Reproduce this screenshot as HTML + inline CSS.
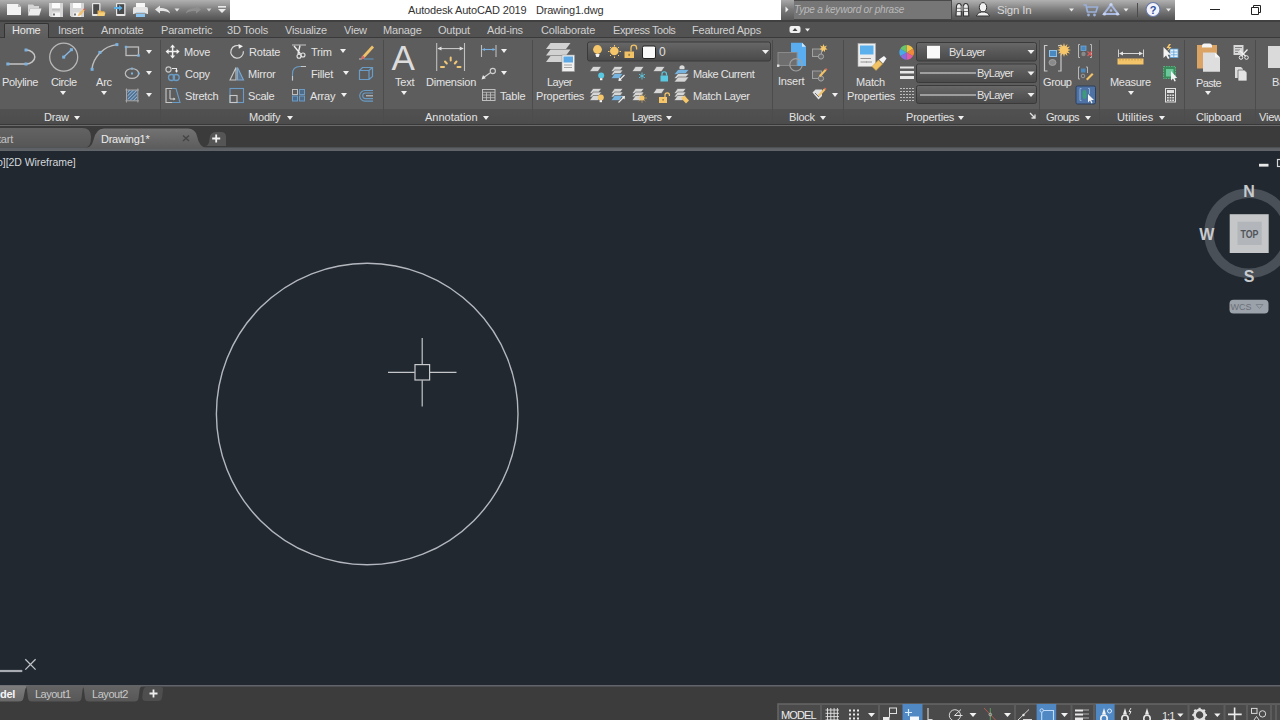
<!DOCTYPE html>
<html><head><meta charset="utf-8">
<style>
*{margin:0;padding:0;box-sizing:border-box}
html,body{width:1280px;height:720px;overflow:hidden;background:#212830;font-family:"Liberation Sans",sans-serif;position:relative}
.a{position:absolute}
.t{position:absolute;white-space:nowrap;color:#e4e4e4;font-size:11px;line-height:11px;letter-spacing:-0.2px}
.sv{position:absolute;overflow:visible}
.dd{position:absolute;width:0;height:0;border-left:3.5px solid transparent;border-right:3.5px solid transparent;border-top:4px solid #f0f0f0}
.vsep{position:absolute;width:1px;background:#4a4a4a;border-right:1px solid #606060}
#tbback{left:0;top:0;width:1280px;height:21px;background:#474747}
#qat{left:0;top:0;width:230px;height:20px;background:linear-gradient(#b0b0b0 0,#9a9a9a 22%,#808080 45%,#6a6a6a 70%,#5a5a5a 90%,#545454 100%)}
#title{left:230px;top:0;width:551px;height:21px;background:#fff}
#srchL{left:781px;top:0;width:13px;height:20px;background:linear-gradient(#a8a8a8,#7a7a7a 45%,#5a5a5a)}
#srch{left:794px;top:0;width:157px;height:19px;background:#767676;border-top:1px solid #4a4a4a}
#srchR{left:951px;top:0;width:224px;height:20px;background:linear-gradient(#b0b0b0 0,#9a9a9a 22%,#808080 45%,#6a6a6a 70%,#5a5a5a 90%,#545454 100%);border-left:1px solid #4a4a4a}
#winbtn{left:1175px;top:0;width:105px;height:21px;background:#fff}
#tabs{left:0;top:19.5px;width:1280px;height:18.5px;background:#525252;border-top:2px solid #404040;border-bottom:1px solid #3a3a3a}
#ribbon{left:0;top:38px;width:1280px;height:71px;background:#5d5d5d}
#ptitles{left:0;top:108.5px;width:1280px;height:16.5px;background:linear-gradient(#515151,#4c4c4c)}
#ftabs{left:0;top:125px;width:1280px;height:24px;background:#3b3b3b;border-top:1px solid #6a6a6a}
#fsep{left:0;top:147px;width:1280px;height:4px;background:linear-gradient(#46484a,#5c5f63 35%,#62666a)}
#canvas{left:0;top:151px;width:1280px;height:534px;background:#212830}
#ltabs{left:0;top:685px;width:1280px;height:35px;background:#3c3c3c}
</style></head><body>
<!-- ========== TITLE BAR ========== -->
<div id="tbback" class="a"></div>
<div id="qat" class="a"></div>
<div id="title" class="a"></div>
<div class="t" style="left:408px;top:4px;font-size:11px;line-height:13px;color:#333;letter-spacing:-0.15px">Autodesk AutoCAD 2019</div>
<div class="t" style="left:536px;top:4px;font-size:11px;line-height:13px;color:#333;letter-spacing:-0.2px">Drawing1.dwg</div>
<div id="srchL" class="a"></div>
<div id="srch" class="a"></div>
<div class="t" style="left:796px;top:4px;font-size:10px;line-height:12px;color:#bababa;font-style:italic;letter-spacing:-0.2px;margin-left:-2px">Type a keyword or phrase</div>
<div id="srchR" class="a"></div>
<div class="t" style="left:997px;top:4px;font-size:11.5px;line-height:13px;color:#d8d8d8">Sign In</div>
<div id="winbtn" class="a"></div>
<svg class="sv" style="left:0;top:0" width="1280" height="22" viewBox="0 0 1280 22">
 <!-- new -->
 <path d="M7 4H18L21 7V15H7Z" fill="#f2f2f2"/><path d="M18 4V7H21Z" fill="#b8b8b8"/>
 <!-- open -->
 <path d="M28 4.5H33L34.5 6H39V8.5H30L28 15.5Z" fill="#d4d4d4"/><path d="M28 15.5L30.2 8.5H41.5L39.3 15.5Z" fill="#ececec"/>
 <!-- save -->
 <path d="M49 3H63V17H50.5L49 15.5Z" fill="#d6d6d6"/><rect x="52" y="3" width="8" height="5" fill="#fbfbfb"/><rect x="52" y="9" width="8" height="1.5" fill="#bcbcbc"/><rect x="52.5" y="12.5" width="7.5" height="4.5" fill="#f4f4f4"/><rect x="53" y="13.5" width="2" height="2" fill="#777"/>
 <!-- save as -->
 <path d="M70 3H84V17H71.5L70 15.5Z" fill="#d6d6d6"/><rect x="73" y="3" width="8" height="5" fill="#fbfbfb"/><rect x="73.5" y="12.5" width="7.5" height="4.5" fill="#f4f4f4"/><rect x="74" y="13.5" width="2" height="2" fill="#777"/>
 <path d="M77.5 16.5L79 13L84 8.5L85 10L81 15Z" fill="#f0c070"/><path d="M83 9.2L84.2 8.2L85.4 9.6L84.4 10.6Z" fill="#e05a50"/>
 <!-- phone open -->
 <rect x="92" y="3" width="8.5" height="13" rx="1" fill="#e6e6e6"/><rect x="93.2" y="4.2" width="6" height="9.8" fill="#4a4a4a"/>
 <path d="M97.5 10.5H100.5L101.3 11.3H104.5V16H97.5Z" fill="#e8b050"/><path d="M97.5 16L98.8 12.5H105.5L104.3 16Z" fill="#f6cf78"/>
 <!-- phone share -->
 <rect x="116" y="3" width="9.5" height="13" rx="1" fill="#e6e6e6"/><rect x="117.2" y="4.2" width="7" height="9.8" fill="#4a4a4a"/>
 <path d="M114 7H119V5L122.5 8L119 11V9H114Z" fill="#5ab0e8"/>
 <!-- plot -->
 <rect x="136" y="3" width="9" height="4.5" fill="#f6f6f6"/><path d="M133 8.5Q133 7 134.5 7H146.5Q148 7 148 8.5V14H133Z" fill="#e4e4e4"/><rect x="136" y="12.5" width="9" height="4.5" fill="#8cc4ee"/><rect x="134.5" y="13" width="12" height="1" fill="#9a9a9a"/>
 <!-- undo -->
 <path d="M155 9.5L160 5.5V8C165 8 169.5 9.5 170 13.5C168 11.5 165 11 160 11V13.5Z" fill="#e6e6e6"/>
 <path d="M174.5 8.5H179.5L177 11.5Z" fill="#e6e6e6"/>
 <!-- redo -->
 <path d="M201 9.5L196 5.5V8C191 8 186.5 9.5 186 13.5C188 11.5 191 11 196 11V13.5Z" fill="#8e8e8e"/>
 <path d="M206.5 8.5H211.5L209 11.5Z" fill="#c8c8c8"/>
 <!-- customize -->
 <rect x="218" y="6" width="8" height="1.6" fill="#eaeaea"/><path d="M218 9H226L222 13Z" fill="#eaeaea"/>
 <!-- small arrow before search -->
 <path d="M785.5 6.5L788.5 9.5L785.5 12.5Z" fill="#f0f0f0"/>
 <!-- binoculars -->
 <g stroke="#333" stroke-width="1.1"><path d="M956.5 6Q957 3.5 959 3.5Q961 3.5 961.3 6V16H956Z" fill="#f0f0f0"/><path d="M963.5 6Q963.8 3.5 965.8 3.5Q967.8 3.5 968.3 6L968.8 16H963.5Z" fill="#f0f0f0"/></g>
 <rect x="961" y="6" width="2.7" height="5" fill="#888"/><path d="M956.3 11.5H961M963.7 11.5H968.5M957 8.3H961M963.7 8.3H968" stroke="#555" stroke-width="0.8"/>
 <!-- user -->
 <ellipse cx="983" cy="7.3" rx="3.7" ry="4.7" fill="#f2f2f2" stroke="#333" stroke-width="1"/><path d="M976.3 16Q977.5 12.3 981.5 12H984.5Q988.5 12.3 989.7 16Z" fill="#f2f2f2" stroke="#333" stroke-width="1"/>
 <path d="M1069 8.5H1074L1071.5 11.5Z" fill="#eaeaea"/>
 <!-- cart -->
 <path d="M1083.5 5H1086L1087.5 12H1096L1097.5 7H1087" fill="none" stroke="#9ab0d8" stroke-width="1.7"/><circle cx="1088.5" cy="15" r="1.4" fill="#9ab0d8"/><circle cx="1094.5" cy="15" r="1.4" fill="#9ab0d8"/>
 <!-- a360 -->
 <path d="M1111 4.5L1118 14H1104Z" fill="none" stroke="#a8b8e0" stroke-width="2"/><circle cx="1111" cy="4.5" r="1.6" fill="#c8d4f0"/><circle cx="1104.5" cy="14" r="1.6" fill="#c8d4f0"/><circle cx="1117.5" cy="14" r="1.6" fill="#c8d4f0"/><circle cx="1111" cy="10.5" r="1.3" fill="#a8b8e0"/>
 <path d="M1123.5 8.5H1128.5L1126 11.5Z" fill="#eaeaea"/>
 <rect x="1137" y="3" width="1" height="14" fill="#4c4c4c"/>
 <!-- help -->
 <circle cx="1153" cy="9.5" r="7" fill="#f2f4fa" stroke="#6878a8" stroke-width="1.2"/>
 <text x="1153" y="14" font-family="Liberation Sans" font-weight="bold" font-size="11" fill="#3050a0" text-anchor="middle">?</text>
 <path d="M1166 8.5H1171L1168.5 11.5Z" fill="#eaeaea"/>
 <!-- window buttons -->
 <rect x="1210" y="9" width="10" height="1" fill="#222"/>
 <path d="M1251.5 7.5H1258.5V14.5H1251.5Z M1253.5 7.5V5.5H1260.5V12.5H1258.5" fill="none" stroke="#222" stroke-width="1"/>
</svg>

<!-- ========== RIBBON TABS ========== -->
<div id="tabs" class="a"></div>
<div class="a" style="left:4px;top:22.5px;width:45px;height:16px;background:linear-gradient(#686868,#5c5c5c);border:1px solid #333;border-bottom:none;border-radius:2px 2px 0 0"></div>
<div class="t" style="left:12px;top:25px;color:#e8e8e8">Home</div>
<div class="t" style="left:58px;top:25px;color:#d0d0d0;letter-spacing:-0.4px">Insert</div>
<div class="t" style="left:101px;top:25px;color:#d0d0d0">Annotate</div>
<div class="t" style="left:161px;top:25px;color:#d0d0d0">Parametric</div>
<div class="t" style="left:227px;top:25px;color:#d0d0d0">3D Tools</div>
<div class="t" style="left:285px;top:25px;color:#d0d0d0">Visualize</div>
<div class="t" style="left:344px;top:25px;color:#d0d0d0">View</div>
<div class="t" style="left:383px;top:25px;color:#d0d0d0">Manage</div>
<div class="t" style="left:438px;top:25px;color:#d0d0d0">Output</div>
<div class="t" style="left:487px;top:25px;color:#d0d0d0">Add-ins</div>
<div class="t" style="left:541px;top:25px;color:#d0d0d0">Collaborate</div>
<div class="t" style="left:613px;top:25px;color:#d0d0d0;letter-spacing:-0.45px">Express Tools</div>
<div class="t" style="left:692px;top:25px;color:#d0d0d0">Featured Apps</div>

<!-- ========== RIBBON PANELS ========== -->
<div id="ribbon" class="a"></div>
<div id="ptitles" class="a"></div>
<div class="a" style="left:0;top:124px;width:1280px;height:1px;background:#383838"></div>
<!-- panel separators -->
<div class="a" style="left:160px;top:40px;width:1px;height:84px;background:#4c4c4c"></div>
<div class="a" style="left:383px;top:40px;width:1px;height:84px;background:#4c4c4c"></div>
<div class="a" style="left:532px;top:40px;width:1px;height:84px;background:#4c4c4c"></div>
<div class="a" style="left:772px;top:40px;width:1px;height:84px;background:#4c4c4c"></div>
<div class="a" style="left:843px;top:40px;width:1px;height:84px;background:#4c4c4c"></div>
<div class="a" style="left:1039px;top:40px;width:1px;height:84px;background:#4c4c4c"></div>
<div class="a" style="left:1099px;top:40px;width:1px;height:84px;background:#4c4c4c"></div>
<div class="a" style="left:1184px;top:40px;width:1px;height:84px;background:#4c4c4c"></div>
<div class="a" style="left:1255px;top:40px;width:1px;height:84px;background:#4c4c4c"></div>
<!-- panel titles -->
<div class="t" style="left:44px;top:112px;color:#e2e2e2">Draw</div><div class="dd" style="left:74px;top:116px"></div>
<div class="t" style="left:249px;top:112px;color:#e2e2e2">Modify</div><div class="dd" style="left:287px;top:116px"></div>
<div class="t" style="left:425px;top:112px;color:#e2e2e2;letter-spacing:0px">Annotation</div><div class="dd" style="left:483px;top:116px"></div>
<div class="t" style="left:632px;top:112px;color:#e2e2e2;letter-spacing:-0.6px">Layers</div><div class="dd" style="left:666px;top:116px"></div>
<div class="t" style="left:789px;top:112px;color:#e2e2e2">Block</div><div class="dd" style="left:820px;top:116px"></div>
<div class="t" style="left:906px;top:112px;color:#e2e2e2">Properties</div><div class="dd" style="left:958px;top:116px"></div>
<div class="t" style="left:1046px;top:112px;color:#e2e2e2;letter-spacing:-0.5px">Groups</div><div class="dd" style="left:1085px;top:116px"></div>
<div class="t" style="left:1117px;top:112px;color:#e2e2e2;letter-spacing:0.1px">Utilities</div><div class="dd" style="left:1159px;top:116px"></div>
<div class="t" style="left:1196px;top:112px;color:#e2e2e2">Clipboard</div>
<div class="t" style="left:1259px;top:112px;color:#e2e2e2">View</div>
<svg class="sv" style="left:1029px;top:112px" width="8" height="8" viewBox="0 0 8 8"><path d="M1 1L6 6M6 2.5V6H2.5" fill="none" stroke="#e0e0e0" stroke-width="1.3"/></svg>

<!-- ribbon icons -->
<svg class="sv" style="left:0;top:0" width="1280" height="125" viewBox="0 0 1280 125">
 <defs>
  <linearGradient id="ddg" x1="0" y1="0" x2="0" y2="1"><stop offset="0" stop-color="#686868"/><stop offset="0.5" stop-color="#585858"/><stop offset="1" stop-color="#4a4a4a"/></linearGradient>
  <pattern id="hatch" width="2.5" height="2.5" patternUnits="userSpaceOnUse" patternTransform="rotate(45)"><rect width="2.5" height="2.5" fill="#4c6a88"/><rect width="1" height="2.5" fill="#8fb4d8"/></pattern>
 </defs>
 <g fill="#80b6e4">
 </g>
 <!-- Polyline -->
 <path d="M8 64H26M26 50A8.8 7 0 0 1 26 64" fill="none" stroke="#c4c4c4" stroke-width="1.5"/>
 <rect x="6.3" y="62.5" width="3" height="3" fill="#7cb2e0"/><rect x="24.5" y="62.5" width="3" height="3" fill="#7cb2e0"/><rect x="24.5" y="48.5" width="3" height="3" fill="#7cb2e0"/>
 <!-- Circle -->
 <circle cx="63.7" cy="57.1" r="14" fill="none" stroke="#b8b8b8" stroke-width="1.3"/>
 <path d="M63.7 57L71.4 49.7" stroke="#8cbce8" stroke-width="1.2"/>
 <rect x="62.2" y="55.6" width="3" height="3" fill="#7cb2e0"/><rect x="69.9" y="48.2" width="3" height="3" fill="#7cb2e0"/>
 <!-- Arc -->
 <path d="M92 69C93 58 103 46 117 44.6" fill="none" stroke="#bdbdbd" stroke-width="1.4"/>
 <rect x="90.6" y="67.8" width="3" height="3" fill="#7cb2e0"/><rect x="98.4" y="50.9" width="3" height="3" fill="#7cb2e0"/><rect x="115.4" y="43.1" width="3" height="3" fill="#7cb2e0"/>
 <!-- Rectangle -->
 <rect x="126" y="47" width="12.5" height="8.5" fill="none" stroke="#bdbdbd" stroke-width="1.3"/>
 <rect x="124.8" y="45.8" width="2.4" height="2.4" fill="#7cb2e0"/><rect x="137.3" y="54.3" width="2.4" height="2.4" fill="#7cb2e0"/>
 <!-- Ellipse -->
 <ellipse cx="132" cy="73.5" rx="6.7" ry="4.9" fill="none" stroke="#bdbdbd" stroke-width="1.2"/>
 <rect x="131" y="72.5" width="2" height="2" fill="#7cb2e0"/><rect x="131" y="67.6" width="2" height="2" fill="#7cb2e0"/><rect x="137.8" y="72.5" width="2" height="2" fill="#7cb2e0"/>
 <!-- Hatch -->
 <rect x="127.5" y="90" width="9.5" height="10.5" fill="url(#hatch)"/>
 <path d="M126.5 88.5V102.5M137.8 88.5V102.5M125.5 90H139M125.5 100.8H139" stroke="#a8a8a8" stroke-width="1"/>
 <!-- Move -->
 <g stroke="#f2f2f2" stroke-width="1.5" fill="none"><path d="M172.6 46V57.2M167 51.6H178.2"/></g>
 <g fill="#f2f2f2"><path d="M172.6 44.6L170 47.6H175.2Z"/><path d="M172.6 58.6L170 55.6H175.2Z"/><path d="M165.6 51.6L168.6 49V54.2Z"/><path d="M179.6 51.6L176.6 49V54.2Z"/></g>
 <!-- Rotate -->
 <path d="M240.5 46.5A6.3 6.3 0 1 0 243.4 51.2" fill="none" stroke="#d8d8d8" stroke-width="1.2"/>
 <path d="M238.5 44L243 46.3L238.8 48.8Z" fill="#f2f2f2"/>
 <!-- Copy -->
 <circle cx="168.5" cy="69.5" r="2.6" fill="none" stroke="#c8c8c8" stroke-width="1.1"/>
 <path d="M172 68.5H176.5V71" fill="none" stroke="#e8e8e8" stroke-width="1.1"/><path d="M174.8 70.5H178.2L176.5 72.8Z" fill="#f0f0f0"/>
 <circle cx="171.5" cy="77.5" r="3" fill="none" stroke="#6a9cc6" stroke-width="1.3"/><circle cx="176.2" cy="77.5" r="3" fill="none" stroke="#6a9cc6" stroke-width="1.3"/>
 <!-- Mirror -->
 <path d="M230 80L236 67.5V80Z" fill="none" stroke="#c8c8c8" stroke-width="1.1"/>
 <path d="M237.5 67.5L243.5 80H237.5Z" fill="#5e7690" stroke="#7aa8d0" stroke-width="1.1"/>
 <!-- Stretch -->
 <path d="M172 88.5H166V102.5H172" fill="none" stroke="#c8c8c8" stroke-width="1.1"/>
 <path d="M172 88.5H176L180 102.5H172" fill="none" stroke="#6a9cc6" stroke-width="1.1"/>
 <path d="M170 90V99H174" fill="none" stroke="#d0d0d0" stroke-width="1"/><path d="M173.5 97.5L175.5 99L173.5 100.5Z" fill="#e0e0e0"/>
 <!-- Scale -->
 <rect x="230" y="88.5" width="13.5" height="14" fill="none" stroke="#6a9cc6" stroke-width="1.1"/>
 <rect x="230" y="95.5" width="7" height="7" fill="none" stroke="#c8c8c8" stroke-width="1.1"/>
 <!-- Trim -->
 <path d="M292 45H306" stroke="#c8c8c8" stroke-width="1"/>
 <path d="M294 46L300.5 54M300 45.5L298 54" stroke="#eaeaea" stroke-width="1.4"/>
 <circle cx="299" cy="56.3" r="2" fill="none" stroke="#e6e6e6" stroke-width="1.1"/><circle cx="303" cy="55" r="2" fill="none" stroke="#e6e6e6" stroke-width="1.1"/>
 <!-- Erase -->
 <path d="M361.5 57L372 45.5L374 47.5L363.5 59Z" fill="#f0c26a"/>
 <path d="M361.5 57L363.5 59L361 59.5Z M361.5 57L363 55.5L365 57.5L363.5 59Z" fill="#d86a6a"/>
 <rect x="359" y="58.5" width="2.5" height="1" fill="#c8c8c8"/><rect x="364" y="58.5" width="9.5" height="1" fill="#5e9ccc"/>
 <!-- Fillet -->
 <path d="M292.5 80.5V74Q292.5 66.5 300 66.5H306" fill="none" stroke="#6a9cc6" stroke-width="1.1"/>
 <path d="M292.5 80.5V76M301 66.5H306" fill="none" stroke="#c8c8c8" stroke-width="1.1"/>
 <!-- Explode (box) -->
 <path d="M359.5 70.5H369V79.5H359.5Z M359.5 70.5L362.5 67.5H372.5V76.5L369 79.5 M369 70.5L372.5 67.5" fill="none" stroke="#6a9cc6" stroke-width="1.2"/>
 <!-- Array -->
 <rect x="292.5" y="89.5" width="5" height="5" fill="none" stroke="#bdbdbd" stroke-width="1"/>
 <rect x="299.5" y="89.5" width="5" height="5" fill="#4e6c8a" stroke="#6a9cc6" stroke-width="1"/>
 <rect x="292.5" y="96" width="5" height="5" fill="#4e6c8a" stroke="#6a9cc6" stroke-width="1"/>
 <rect x="299.5" y="96" width="5" height="5" fill="#4e6c8a" stroke="#6a9cc6" stroke-width="1"/>
 <!-- Offset -->
 <path d="M373 90.5H365A5.3 5.3 0 0 0 365 101.1H373 M373 93H365.5A2.8 2.8 0 0 0 365.5 98.6H373" fill="none" stroke="#6a9cc6" stroke-width="1.1"/>
 <path d="M373 95.8H366" stroke="#c8c8c8" stroke-width="1.1"/>
 <!-- Text A -->
 <text x="391.5" y="70" font-family="Liberation Sans" font-size="35" fill="#dcdcdc">A</text>
 <!-- Dimension -->
 <path d="M436.7 43V71M464.5 43V71" stroke="#c0c0c0" stroke-width="1.1"/>
 <path d="M438 48.6H463" stroke="#d0d0d0" stroke-width="1"/>
 <path d="M437.5 48.6L441.5 46.6V50.6Z M463.7 48.6L459.7 46.6V50.6Z" fill="#e0e0e0"/>
 <g stroke="#f0c878" stroke-width="2" stroke-linecap="round"><path d="M441 67H444M457.5 67H460.5M445 61.5L446.8 63.5M456.5 61.5L454.8 63.5M450.7 57.5V60.5"/></g>
 <!-- linear dim -->
 <path d="M481.5 45V57M496 45V57" stroke="#bdbdbd" stroke-width="1.1"/>
 <path d="M482.5 49.5H495" stroke="#78b0e0" stroke-width="1.1"/>
 <path d="M482 49.5L485 48V51Z M495.5 49.5L492.5 48V51Z" fill="#78b0e0"/>
 <!-- leader -->
 <circle cx="492.8" cy="71" r="2.6" fill="none" stroke="#d0d0d0" stroke-width="1.1"/>
 <path d="M490.7 72.5L483 78" stroke="#d0d0d0" stroke-width="1.1"/>
 <path d="M481.5 79.5L483 75L485.8 78.2Z" fill="#e6e6e6"/>
 <!-- table -->
 <rect x="482.5" y="89.5" width="12.5" height="11" fill="none" stroke="#c0c0c0" stroke-width="1"/>
 <path d="M482.5 92.3H495M482.5 95H495M482.5 97.7H495M486.5 92.3V100.5M490.5 92.3V100.5" stroke="#c0c0c0" stroke-width="0.8"/>
 <!-- Layer properties big -->
 <g fill="#d2d2d2"><path d="M550.5 43H570.5L566 49H546Z"/><path d="M550.5 49.5H570.5L566 55.5H546Z"/><path d="M550.5 56H566L562 62H546Z"/></g>
 <rect x="562" y="55" width="12.5" height="16.5" fill="#f0f0f0" stroke="#9a9a9a" stroke-width="0.6"/>
 <rect x="563.5" y="56.5" width="9.5" height="6" fill="#5aa8e6"/>
 <path d="M564 65H572M564 67.5H572" stroke="#909090" stroke-width="0.8"/>
 <!-- layer dropdown -->
 <rect x="587.5" y="42" width="183" height="19" rx="2" fill="url(#ddg)" stroke="#3a3a3a" stroke-width="1"/>
 <path d="M762 50H769L765.5 54Z" fill="#f0f0f0"/>
 <circle cx="597.5" cy="49.5" r="4.4" fill="#f5c66a"/><path d="M595.3 54H599.7L598.7 57H596.3Z" fill="#f4f4f4"/>
 <circle cx="614.3" cy="51" r="4.3" fill="#f5c66a"/>
 <g stroke="#f5c66a" stroke-width="1"><path d="M614.5 45V46.5M614.5 56.5V58M608 51.5H609.5M619.5 51.5H621M610 47L611 48M618 55L619 56M619 47L618 48M611 55L610 56"/></g>
 <rect x="624.5" y="51.5" width="9.5" height="6.5" fill="#f2c266"/><path d="M631 51.5V48A2.8 2.8 0 0 1 636.6 48V49.5" fill="none" stroke="#f2c266" stroke-width="1.3"/><rect x="628.5" y="53.8" width="1.2" height="2" fill="#7a6030"/>
 <rect x="642.5" y="46" width="13" height="12.5" rx="1.5" fill="#fafafa" stroke="#222" stroke-width="1"/>
 <!-- row2 layer icons -->
<path d="M593.0 66.5H601.5L598.0 71.5H589.5Z" fill="#d6d6d6" stroke="#555" stroke-width="0.6"/>
<circle cx="601.2" cy="75.5" r="3" fill="#5ac8e0"/><rect x="600" y="78.2" width="2.4" height="2" fill="#f4f4f4"/>
<path d="M614.5 66.5H623L619.5 71.5H611Z" fill="#d6d6d6" stroke="#555" stroke-width="0.6"/><path d="M614.5 70.0H623L619.5 75.0H611Z" fill="#d6d6d6" stroke="#555" stroke-width="0.6"/><path d="M614.5 73.5H623L619.5 78.5H611Z" fill="#78b4e0" stroke="#555" stroke-width="0.6"/><path d="M619 80.5L624.5 75" stroke="#f0f0f0" stroke-width="1.1"/><path d="M618.5 81L619 77.5L622 80.5Z" fill="#f4f4f4"/>
<path d="M635.5 66.5H644L640.5 71.5H632Z" fill="#d6d6d6" stroke="#555" stroke-width="0.6"/>
<g stroke="#5ac8e0" stroke-width="0.9"><path d="M642 72.5V79.5M639 74.2L645 77.8M639 77.8L645 74.2"/></g>
<path d="M656.5 66.5H665L661.5 71.5H653Z" fill="#d6d6d6" stroke="#555" stroke-width="0.6"/><rect x="660.5" y="75.5" width="7.5" height="6" fill="#5ac8e0"/><path d="M662 75.5V74A2.2 2.2 0 0 1 666.5 74V75.5" fill="none" stroke="#5ac8e0" stroke-width="1.2"/>
<circle cx="682" cy="67.8" r="2.6" fill="#dadada"/><path d="M678 69.5H689L685 74.5H674Z" fill="#78b4e0" stroke="#555" stroke-width="0.6"/><path d="M678 73.5H689L685 78.5H674Z" fill="#d6d6d6" stroke="#555" stroke-width="0.6"/><path d="M678 77.0H689L685 82.0H674Z" fill="#d6d6d6" stroke="#555" stroke-width="0.6"/>
<path d="M593.0 88.5H601.5L598.0 93.5H589.5Z" fill="#d6d6d6" stroke="#555" stroke-width="0.6"/><path d="M593.0 92.0H601.5L598.0 97.0H589.5Z" fill="#d6d6d6" stroke="#555" stroke-width="0.6"/><path d="M593.0 95.5H601.5L598.0 100.5H589.5Z" fill="#d6d6d6" stroke="#555" stroke-width="0.6"/><circle cx="600.8" cy="97.5" r="3" fill="#f5c66a"/><rect x="599.6" y="100.2" width="2.4" height="2" fill="#f4f4f4"/>
<path d="M614.5 88.5H623L619.5 93.5H611Z" fill="#d6d6d6" stroke="#555" stroke-width="0.6"/><path d="M614.5 92.0H623L619.5 97.0H611Z" fill="#d6d6d6" stroke="#555" stroke-width="0.6"/><path d="M614.5 95.5H623L619.5 100.5H611Z" fill="#78b4e0" stroke="#555" stroke-width="0.6"/><path d="M618.5 102.5L624 97" stroke="#f0f0f0" stroke-width="1.1"/><path d="M625 96L624.5 99.5L621.5 96.5Z" fill="#f4f4f4"/>
<path d="M635.5 88.5H644L640.5 93.5H632Z" fill="#d6d6d6" stroke="#555" stroke-width="0.6"/><path d="M635.5 92.0H644L640.5 97.0H632Z" fill="#d6d6d6" stroke="#555" stroke-width="0.6"/><path d="M635.5 95.5H644L640.5 100.5H632Z" fill="#d6d6d6" stroke="#555" stroke-width="0.6"/><circle cx="642" cy="98" r="2.6" fill="#f5c66a"/><g stroke="#f5c66a" stroke-width="0.9"><path d="M642 93.5V94.5M642 101.5V102.5M637.5 98H638.5M645.5 98H646.5M638.8 94.8L639.5 95.5M644.5 100.5L645.2 101.2M645.2 94.8L644.5 95.5M639.5 100.5L638.8 101.2"/></g>
<path d="M656.5 88.5H665L661.5 93.5H653Z" fill="#d6d6d6" stroke="#555" stroke-width="0.6"/><rect x="659" y="97" width="8" height="6" fill="#f5c66a"/><path d="M665 97V95A2.2 2.2 0 0 1 669.4 95V96" fill="none" stroke="#f5c66a" stroke-width="1.2"/><rect x="662.5" y="99" width="1.2" height="1.6" fill="#8a6a30"/>
<path d="M677.5 88.5H686L682.5 93.5H674Z" fill="#d6d6d6" stroke="#555" stroke-width="0.6"/><path d="M677.5 92.0H686L682.5 97.0H674Z" fill="#d6d6d6" stroke="#555" stroke-width="0.6"/><path d="M677.5 95.5H686L682.5 100.5H674Z" fill="#d6d6d6" stroke="#555" stroke-width="0.6"/><path d="M681 98L684.5 95.5L689 100.5L686 103.5Z" fill="#f5c66a"/>
 <!-- Insert -->
 <path d="M791 42.7H802L806 46.7V66H791Z" fill="#5aaef0"/><path d="M802 42.7V46.7H806Z" fill="#cde6fa"/>
 <rect x="778" y="52.5" width="19" height="13" fill="#6e6e6e" stroke="#8a8a8a" stroke-width="1"/>
 <circle cx="796" cy="64.8" r="6.2" fill="none" stroke="#a0a0a0" stroke-width="1.2"/>
 <rect x="777" y="64.5" width="2.4" height="2.4" fill="#e0e0e0"/>
 <!-- block small icons -->
 <rect x="812.5" y="49" width="9" height="7.5" fill="#6a6a6a" stroke="#a0a0a0" stroke-width="1"/><circle cx="821" cy="56.5" r="2.6" fill="#6a6a6a" stroke="#a8a8a8" stroke-width="1"/>
 <path d="M823.5 44L824.5 46.5L827 45.5L825.5 47.8L827.5 49.5L825 49.7L825 52.3L823.5 50.2L822 52.3L822 49.7L819.5 49.5L821.5 47.8L820 45.5L822.5 46.5Z" fill="#f5c66a"/>
 <rect x="812.5" y="71" width="9" height="7.5" fill="#6a6a6a" stroke="#a0a0a0" stroke-width="1"/><circle cx="821" cy="78.5" r="2.6" fill="#6a6a6a" stroke="#a8a8a8" stroke-width="1"/>
 <path d="M819 75.5L825 69L826.5 70.5L820.5 77Z" fill="#f2c266"/><path d="M825 69L826 68L827.5 69.5L826.5 70.5Z" fill="#e06a5a"/>
 <path d="M812.5 92.5L815.5 89.5H822V96L818.5 99.5Z" fill="#e0e0e0"/><path d="M815 93L819 97" stroke="#777" stroke-width="1"/>
 <path d="M818 95L824 88.5L825.5 90L819.5 96.5Z" fill="#f2c266"/><path d="M824 88.5L825 87.5L826.5 89L825.5 90Z" fill="#e06a5a"/>
 <!-- Match properties -->
 <rect x="858" y="43.5" width="17.5" height="23" fill="#ececec" stroke="#b0b0b0" stroke-width="0.6"/>
 <rect x="860" y="45.5" width="13.5" height="9" fill="#5ab0ec"/>
 <path d="M860.5 58.5H871M860.5 62H867" stroke="#8a8a8a" stroke-width="0.9"/>
 <path d="M872 66.5L878.5 60L882.5 64L876 70.5Z" fill="#f2c266" stroke="#c89a40" stroke-width="0.6"/><path d="M879 59.5L884 56L886.5 58.5L883 63.5Z" fill="#f6f6f6"/><path d="M866 62H872" stroke="#8a8a8a" stroke-width="0.9"/>
 <!-- color wheel -->
 <g transform="translate(906.7 52.4)">
  <path d="M0 0L0 -7.3A7.3 7.3 0 0 1 6.32 -3.65Z" fill="#f6c244"/>
  <path d="M0 0L6.32 -3.65A7.3 7.3 0 0 1 6.32 3.65Z" fill="#f08a3a"/>
  <path d="M0 0L6.32 3.65A7.3 7.3 0 0 1 0 7.3Z" fill="#e65aa0"/>
  <path d="M0 0L0 7.3A7.3 7.3 0 0 1 -6.32 3.65Z" fill="#8a6ae0"/>
  <path d="M0 0L-6.32 3.65A7.3 7.3 0 0 1 -6.32 -3.65Z" fill="#4aa8e6"/>
  <path d="M0 0L-6.32 -3.65A7.3 7.3 0 0 1 0 -7.3Z" fill="#6ac46a"/>
 </g>
 <!-- lineweight -->
 <rect x="900" y="66.5" width="14" height="2" fill="#e6e6e6"/><rect x="900" y="71" width="14" height="2.5" fill="#e6e6e6"/><rect x="900" y="76" width="14" height="3" fill="#e6e6e6"/>
 <!-- linetype -->
 <g stroke="#bdbdbd" stroke-width="1" stroke-dasharray="2 1"><path d="M900 88.5H914M900 91.5H914M900 94.5H914M900 97.5H914M900 100.5H914"/></g>
 <!-- prop dropdowns -->
 <rect x="916.5" y="42.5" width="120" height="18.5" rx="2" fill="url(#ddg)" stroke="#3a3a3a" stroke-width="1"/>
 <rect x="916.5" y="64" width="120" height="18.5" rx="2" fill="url(#ddg)" stroke="#3a3a3a" stroke-width="1"/>
 <rect x="916.5" y="85.5" width="120" height="18" rx="2" fill="url(#ddg)" stroke="#3a3a3a" stroke-width="1"/>
 <rect x="927" y="45.8" width="13" height="12.7" fill="#fafafa"/>
 <path d="M920 73H976M920 95H976" stroke="#e4e4e4" stroke-width="1.2"/>
 <path d="M1027.5 50H1034.5L1031 54Z M1027.5 71.5H1034.5L1031 75.5Z M1027.5 93H1034.5L1031 97Z" fill="#f0f0f0"/>
 <!-- Group -->
 <path d="M1047.5 45.5H1044.5V71H1047.5M1058 45.5H1061V71H1058" fill="none" stroke="#c8c8c8" stroke-width="1.2"/>
 <rect x="1049.5" y="50.5" width="7" height="6" fill="#4a88c0" stroke="#8cc0ea" stroke-width="1"/>
 <ellipse cx="1052.5" cy="62.5" rx="3.5" ry="3" fill="#8a8a8a" stroke="#a8a8a8" stroke-width="0.8"/>
 <path d="M1064.0 43.0L1065.0 46.3L1067.5 43.9L1066.7 47.3L1070.1 46.5L1067.7 49.0L1071.0 50.0L1067.7 51.0L1070.1 53.5L1066.7 52.7L1067.5 56.1L1065.0 53.7L1064.0 57.0L1063.0 53.7L1060.5 56.1L1061.3 52.7L1057.9 53.5L1060.3 51.0L1057.0 50.0L1060.3 49.0L1057.9 46.5L1061.3 47.3L1060.5 43.9L1063.0 46.3Z" fill="#f5c66a"/>
 <path d="M1080 44.5H1078.5V57.5H1080M1090 44.5H1091.5V57.5H1090" fill="none" stroke="#b8b8b8" stroke-width="1"/>
 <rect x="1081" y="46" width="5" height="4.5" fill="#4a88c0" stroke="#78b0e0" stroke-width="0.7"/><circle cx="1083.5" cy="54" r="2.2" fill="#8a8a8a"/>
 <path d="M1087.5 51.5L1092 56M1092 51.5L1087.5 56" stroke="#e05a5a" stroke-width="1.2"/>
 <path d="M1080 67H1078.5V79H1080M1086 67H1087.5V73" fill="none" stroke="#b8b8b8" stroke-width="1"/>
 <rect x="1081" y="68.5" width="4.5" height="4" fill="#4a88c0"/><circle cx="1083" cy="76" r="1.8" fill="none" stroke="#aaa" stroke-width="0.8"/>
 <path d="M1086 79L1092 73L1093.5 74.5L1087.5 80.5Z" fill="#f2c266"/>
 <rect x="1076" y="86" width="19.5" height="18" rx="1.5" fill="#4e72a4" stroke="#2e3e58" stroke-width="1"/>
 <path d="M1081.5 88.5H1080V100.5H1081.5M1088 88.5H1089.5V94" fill="none" stroke="#8ab0d8" stroke-width="1"/>
 <rect x="1082.5" y="90" width="4" height="9" rx="2" fill="#3e9a7a"/>
 <path d="M1088 94V102.5L1090 100.5L1091.5 103.5L1092.5 103L1091.2 100H1094Z" fill="#f4f4f4"/>
 <!-- Measure -->
 <path d="M1118.5 49.5V57M1143.5 49.5V57" stroke="#d0d0d0" stroke-width="1"/>
 <path d="M1120 53.5H1142" stroke="#d8d8d8" stroke-width="1"/>
 <path d="M1119 53.5L1123 51.5V55.5Z M1143 53.5L1139 51.5V55.5Z" fill="#e8e8e8"/>
 <rect x="1117.5" y="58.5" width="26" height="6" fill="#f4c46a"/>
 <path d="M1120 58.5V60.5M1123 58.5V60.5M1126 58.5V60.5M1129 58.5V60.5M1132 58.5V60.5M1135 58.5V60.5M1138 58.5V60.5M1141 58.5V60.5" stroke="#b88c3a" stroke-width="0.7"/>
 <!-- quick select -->
 <rect x="1170" y="49" width="8" height="8.5" fill="#e8f2fa" stroke="#5aa0d8" stroke-width="0.8"/>
 <path d="M1171 52H1177.5M1171 54.8H1177.5M1173.8 49.5V57.5" stroke="#5aa0d8" stroke-width="0.8"/>
 <path d="M1163.5 47V58L1166 55.5L1168 59L1169.5 58.2L1167.6 54.8H1171Z" fill="#f4f4f4"/>
 <path d="M1169 44L1166.5 48H1169L1167 51.5L1171.5 47H1169L1171 44Z" fill="#f5c66a"/>
 <!-- select all -->
 <rect x="1163.5" y="66.5" width="12" height="12" fill="#3a8a5a" stroke="#5ac08a" stroke-width="0.8" stroke-dasharray="1.5 1"/>
 <rect x="1166" y="69" width="7.5" height="7.5" fill="#6ac89a"/>
 <path d="M1171 71V80.5L1173 78.5L1174.5 81.5L1175.8 81L1174.5 78H1177.2Z" fill="#f4f4f4"/>
 <!-- calculator -->
 <rect x="1165.5" y="88.5" width="10" height="13.5" fill="none" stroke="#e0e0e0" stroke-width="1"/>
 <rect x="1167" y="90" width="7" height="3" fill="#e0e0e0"/>
 <g fill="#e0e0e0"><rect x="1167" y="94.5" width="1.8" height="1.5"/><rect x="1169.6" y="94.5" width="1.8" height="1.5"/><rect x="1172.2" y="94.5" width="1.8" height="1.5"/><rect x="1167" y="97" width="1.8" height="1.5"/><rect x="1169.6" y="97" width="1.8" height="1.5"/><rect x="1172.2" y="97" width="1.8" height="1.5"/><rect x="1167" y="99.5" width="1.8" height="1.5"/><rect x="1169.6" y="99.5" width="1.8" height="1.5"/><rect x="1172.2" y="99.5" width="1.8" height="1.5"/></g>
 <!-- Paste -->
 <rect x="1197" y="45" width="20" height="23.5" fill="#dba464"/>
 <path d="M1202 46Q1202 43.5 1204.5 43.5H1209.5Q1212 43.5 1212 46V47.5H1202Z" fill="#f4f4f4"/>
 <path d="M1203 52.5H1215L1220 57.5V71.8H1203Z" fill="#dedede"/><path d="M1215 52.5V57.5H1220Z" fill="#f6f6f6"/>
 <!-- cut -->
 <rect x="1233.5" y="45" width="10" height="10" fill="#d8d8d8"/>
 <path d="M1235 47.5H1242M1235 50H1240M1235 52.5H1238" stroke="#777" stroke-width="0.9"/>
 <path d="M1239.5 50.5L1246.5 57M1247.5 49.5L1241 56.5" stroke="#f0f0f0" stroke-width="1.3"/>
 <circle cx="1241" cy="57.5" r="1.8" fill="#5a5a5a" stroke="#f0f0f0" stroke-width="1"/><circle cx="1246.5" cy="57.5" r="1.8" fill="#5a5a5a" stroke="#f0f0f0" stroke-width="1"/>
 <!-- copy clip -->
 <path d="M1235 67H1241L1243 69V78H1235Z" fill="#dcdcdc"/>
 <path d="M1238 70H1244.5L1247 72.5V81H1238Z" fill="#e4e4e4" stroke="#5a5a5a" stroke-width="0.7"/>
 <!-- view -->
 <rect x="1268" y="46" width="14" height="22" fill="#dadada"/>
</svg>
<!-- ribbon labels -->
<div class="t" style="left:2px;top:77px;letter-spacing:-0.3px">Polyline</div>
<div class="t" style="left:51px;top:77px;letter-spacing:-0.4px">Circle</div><div class="dd" style="left:60px;top:91px"></div>
<div class="t" style="left:96px;top:77px">Arc</div><div class="dd" style="left:101px;top:91px"></div>
<div class="dd" style="left:145.5px;top:49.5px"></div>
<div class="dd" style="left:145.5px;top:71px"></div>
<div class="dd" style="left:145.5px;top:93px"></div>
<div class="t" style="left:184px;top:47px">Move</div>
<div class="t" style="left:249px;top:47px">Rotate</div>
<div class="t" style="left:311px;top:47px">Trim</div><div class="dd" style="left:340px;top:49px"></div>
<div class="t" style="left:185px;top:69px">Copy</div>
<div class="t" style="left:248px;top:69px">Mirror</div>
<div class="t" style="left:311px;top:69px">Fillet</div><div class="dd" style="left:343px;top:71px"></div>
<div class="t" style="left:185px;top:91px">Stretch</div>
<div class="t" style="left:248px;top:91px">Scale</div>
<div class="t" style="left:310px;top:91px">Array</div><div class="dd" style="left:341px;top:93px"></div>
<div class="t" style="left:395px;top:77px">Text</div><div class="dd" style="left:401px;top:91px"></div>
<div class="t" style="left:426px;top:77px">Dimension</div>
<div class="dd" style="left:501px;top:49px"></div>
<div class="dd" style="left:501px;top:71px"></div>
<div class="t" style="left:500px;top:91px">Table</div>
<div class="t" style="left:547px;top:77px;letter-spacing:-0.5px">Layer</div>
<div class="t" style="left:536px;top:91px">Properties</div>
<div class="t" style="left:693px;top:69px;letter-spacing:-0.45px">Make Current</div>
<div class="t" style="left:693px;top:91px;letter-spacing:-0.35px">Match Layer</div>
<div class="t" style="left:778px;top:76px">Insert</div>
<div class="dd" style="left:832px;top:93px"></div>
<div class="t" style="left:856px;top:77px">Match</div>
<div class="t" style="left:847px;top:91px">Properties</div>
<div class="t" style="left:1043px;top:77px;letter-spacing:-0.4px">Group</div>
<div class="t" style="left:1110px;top:77px;letter-spacing:-0.3px">Measure</div><div class="dd" style="left:1128px;top:91px"></div>
<div class="t" style="left:1196px;top:77.5px;letter-spacing:-0.65px">Paste</div><div class="dd" style="left:1205px;top:91px"></div>
<div class="t" style="left:1272px;top:77px">Ba</div>
<div class="t" style="left:659px;top:47px;font-size:12px;color:#e0e0e0">0</div>
<div class="t" style="left:949px;top:47px;letter-spacing:-0.6px">ByLayer</div>
<div class="t" style="left:977px;top:68px;letter-spacing:-0.6px">ByLayer</div>
<div class="t" style="left:977px;top:90px;letter-spacing:-0.6px">ByLayer</div>
<svg class="sv" style="left:786.5px;top:22.7px" width="30" height="14" viewBox="0 0 30 14"><rect x="2.5" y="3" width="11" height="7" rx="2" fill="#f0f0f0"/><path d="M5.5 8L8 5L10.5 8Z" fill="#444"/><path d="M18 5.5H23L20.5 8.5Z" fill="#f0f0f0"/></svg>

<!-- ========== FILE TABS ========== -->
<div id="ftabs" class="a"></div>
<div id="fsep" class="a"></div>
<svg class="sv" style="left:0;top:120px" width="260" height="32" viewBox="0 120 260 32">
 <defs>
  <linearGradient id="tabg" x1="0" y1="0" x2="0" y2="1"><stop offset="0" stop-color="#737373"/><stop offset="1" stop-color="#5c5c5c"/></linearGradient>
  <linearGradient id="tabs2" x1="0" y1="0" x2="0" y2="1"><stop offset="0" stop-color="#636363"/><stop offset="1" stop-color="#565656"/></linearGradient>
 </defs>
 <path d="M-5 147.5V128H82Q91 128 91 137Q91 147.5 85 147.5Z" fill="url(#tabs2)"/>
 <path d="M85 148.5Q91.5 148 93.5 140Q96 128.5 104 128.5H188Q195 128.5 197 136Q199 147 207 148.5Z" fill="url(#tabg)"/>
 <path d="M206 146Q209 145 209.5 139Q210 132 216 132H221Q226 132 226 137V146Z" fill="#555"/>
 <path d="M216.2 134.5V142.5M212.2 138.5H220.2" stroke="#f0f0f0" stroke-width="1.8"/>
 <path d="M183 135.5L189 141M189 135.5L183 141" stroke="#444" stroke-width="1.3"/>
</svg>
<div class="t" style="left:-2px;top:134px;color:#c2c2c2">tart</div>
<div class="t" style="left:101px;top:134px;color:#ececec;letter-spacing:-0.25px">Drawing1*</div>

<!-- ========== CANVAS ========== -->
<div id="canvas" class="a"></div>
<div class="t" style="left:-3px;top:157px;font-size:10.5px;color:#d4d8dc;letter-spacing:-0.05px">o][2D Wireframe]</div>
<svg class="sv" style="left:0;top:151px" width="1280" height="534" viewBox="0 151 1280 534">
 <circle cx="367.2" cy="414" r="150.8" fill="none" stroke="#b4b8be" stroke-width="1.4"/>
 <path d="M422.2 338V364.5M422.2 380.2V406.5M388 372.3H414.8M429.7 372.3H456.5" stroke="#c4c6ca" stroke-width="1.2"/>
 <rect x="415" y="364.6" width="14.6" height="15.4" fill="none" stroke="#c8cacd" stroke-width="1.2"/>
 <!-- UCS -->
 <path d="M0 671H22.3" stroke="#a8acb2" stroke-width="2.2"/>
 <path d="M25.3 659.3L35.6 669.6M35.6 659.3L25.3 669.6" stroke="#c0c4c8" stroke-width="1.3"/>
 <!-- viewcube -->
 <circle cx="1249" cy="233.2" r="40" fill="none" stroke="#4a5058" stroke-width="9.5"/>
 <rect x="1229.7" y="214.2" width="39" height="38.8" fill="#c4c6c8"/>
 <rect x="1237.5" y="221.7" width="24.2" height="23.3" fill="#b2b6ba"/>
 <text x="1249.5" y="238" font-family="Liberation Sans" font-weight="bold" font-size="11" fill="#50545a" text-anchor="middle" transform="translate(1249.5 0) scale(0.8 1) translate(-1249.5 0)">TOP</text>
 <text x="1249" y="197.3" font-family="Liberation Sans" font-weight="bold" font-size="16" fill="#c8cacd" text-anchor="middle">N</text>
 <text x="1249" y="282" font-family="Liberation Sans" font-weight="bold" font-size="16" fill="#c8cacd" text-anchor="middle">S</text>
 <text x="1206.8" y="240" font-family="Liberation Sans" font-weight="bold" font-size="16" fill="#c8cacd" text-anchor="middle">W</text>
 <rect x="1229.5" y="299.8" width="39" height="13.6" rx="4" fill="#9ca2aa"/>
 <text x="1241" y="310" font-family="Liberation Sans" font-size="9" fill="#6a7078" text-anchor="middle">WCS</text>
 <path d="M1256 304.5H1263L1259.5 308.5Z" fill="none" stroke="#7a8088" stroke-width="0.9"/>
 <!-- viewport controls -->
 <rect x="1259" y="163.8" width="9.5" height="2.8" fill="#e8e8e8"/>
 <rect x="1277.5" y="159.5" width="5" height="7" fill="none" stroke="#d8d8d8" stroke-width="1.2"/>
</svg>

<!-- ========== LAYOUT TABS / STATUS ========== -->
<div id="ltabs" class="a"></div>
<svg class="sv" style="left:0;top:684px" width="1280" height="36" viewBox="0 684 1280 36">
 <defs><linearGradient id="mtab" x1="0" y1="0" x2="0" y2="1"><stop offset="0" stop-color="#7e7e7e"/><stop offset="1" stop-color="#686868"/></linearGradient><linearGradient id="ltab" x1="0" y1="0" x2="0" y2="1"><stop offset="0" stop-color="#646464"/><stop offset="1" stop-color="#575757"/></linearGradient></defs>
 <rect x="0" y="685" width="1280" height="1.5" fill="#62646a"/>
 <path d="M-5 685.5H29Q26 686 25 690L23.5 698Q22.8 701.5 19 701.5H-5Z" fill="url(#mtab)"/>
 <path d="M25 685.5H86Q83 686 82.5 690L81.5 698Q81 701.5 77.5 701.5H32Q28.5 701.5 28 698L27 690Q26.5 686 25 685.5Z" fill="url(#ltab)"/>
 <path d="M82 685.5H143Q140 686 139.5 690L138.5 698Q138 701.5 134.5 701.5H89Q85.5 701.5 85 698L84 690Q83.5 686 82 685.5Z" fill="url(#ltab)"/>
 <path d="M146 686.5Q143.5 687.5 143 691L142.3 697Q142 701 145.5 701H158Q161.5 701 162 697.5L163 690Q163.5 686.5 160 686.5Z" fill="#4e4e4e"/>
 <path d="M153.5 689.5V697.5M149.5 693.5H157.5" stroke="#ececec" stroke-width="1.8"/>
 <!-- status bar -->
 <rect x="778" y="704" width="503" height="18" fill="#4a4a4a" stroke="#646464" stroke-width="1.6"/>
 <g fill="#5c5c5c"><rect x="820" y="703" width="2" height="17"/><rect x="878" y="703" width="2" height="17"/><rect x="1014" y="703" width="2" height="17"/><rect x="1070.5" y="703" width="2" height="17"/><rect x="1093" y="703" width="2" height="17"/><rect x="1187.5" y="703" width="2" height="17"/><rect x="1223.5" y="703" width="2" height="17"/><rect x="1246" y="703" width="2" height="17"/><rect x="1270" y="703" width="2" height="17"/><rect x="1275" y="703" width="2" height="17"/></g>
 <!-- grid -->
 <path d="M827.5 708V720M830.8 708V720M834.1 708V720M837.4 708V720M825.5 710H839M825.5 713.3H839M825.5 716.6H839M825.5 719.9H839" stroke="#e4e4e4" stroke-width="0.9"/>
 <g fill="#e8e8e8"><rect x="849" y="709.5" width="2" height="2"/><rect x="853" y="709.5" width="2" height="2"/><rect x="857" y="709.5" width="2" height="2"/><rect x="849" y="713.5" width="2" height="2"/><rect x="853" y="713.5" width="2" height="2"/><rect x="857" y="713.5" width="2" height="2"/><rect x="849" y="717.5" width="2" height="2"/><rect x="853" y="717.5" width="2" height="2"/><rect x="857" y="717.5" width="2" height="2"/></g>
 <path d="M868 713H875L871.5 717Z" fill="#f2f2f2"/>
 <!-- ortho -->
 <rect x="889.5" y="708" width="7" height="5.5" fill="none" stroke="#e0e0e0" stroke-width="1"/>
 <path d="M889.5 713.5V717.5" stroke="#e0e0e0" stroke-width="1"/>
 <rect x="883" y="717" width="6.5" height="3" fill="#e8e8e8"/>
 <!-- blue snap btn -->
 <rect x="902.5" y="704" width="20" height="16" fill="#5088c4"/>
 <path d="M908.5 709V716M905 712.5H912" stroke="#d8ecff" stroke-width="1.2"/>
 <rect x="910" y="716.5" width="9" height="3.5" fill="#f4f8fc"/>
 <!-- L -->
 <path d="M928 708V720M928 719.5H932.5" stroke="#d8d8d8" stroke-width="1.1"/>
 <!-- polar -->
 <circle cx="954.9" cy="715.3" r="5.6" fill="none" stroke="#d8d8d8" stroke-width="1"/>
 <path d="M954.5 715.5L961 709.5M954.5 715.5H962.5" stroke="#e0e0e0" stroke-width="1"/>
 <path d="M969.5 713H976.5L973 717Z" fill="#f2f2f2"/>
 <!-- iso -->
 <path d="M984 708L995.5 720" stroke="#b05a50" stroke-width="1"/>
 <path d="M990.3 708V720" stroke="#5a9a5a" stroke-width="1"/>
 <circle cx="990.3" cy="714.5" r="1.3" fill="none" stroke="#c8c8c8" stroke-width="0.8"/>
 <path d="M1004 713H1011L1007.5 717Z" fill="#f2f2f2"/>
 <!-- osnap track -->
 <path d="M1018 720L1029 709.5M1023 719.5H1032" stroke="#d8d8d8" stroke-width="1"/>
 <circle cx="1023.5" cy="715" r="1.2" fill="#e8e8e8"/>
 <!-- blue osnap btn -->
 <rect x="1036.6" y="704" width="19.6" height="16" fill="#5088c4"/>
 <path d="M1043.2 710.5H1053.5V720M1041.7 712.2V720" fill="none" stroke="#c0dcf8" stroke-width="1.1"/>
 <circle cx="1041.7" cy="710.5" r="1.7" fill="none" stroke="#c0dcf8" stroke-width="1"/>
 <path d="M1061 713H1068L1064.5 717Z" fill="#f2f2f2"/>
 <!-- lineweight -->
 <g fill="#e8e8e8"><rect x="1075" y="709.5" width="8" height="2"/><rect x="1075" y="713.5" width="8" height="2"/><rect x="1075" y="717.5" width="8" height="2.5"/></g>
 <path d="M1083 710H1089M1083 714H1089M1083 718H1089" stroke="#c8c8c8" stroke-width="0.8"/>
 <!-- annotation btn blue -->
 <rect x="1095.8" y="704" width="18.8" height="16" fill="#5088c4"/>
 <path d="M1104 708L1106 714.5H1102Z" fill="#f4f4f4"/><circle cx="1104" cy="718.5" r="3.2" fill="none" stroke="#f4f4f4" stroke-width="1.6"/>
 <circle cx="1109.5" cy="711" r="2" fill="none" stroke="#d8ecff" stroke-width="1"/>
 <path d="M1125 708L1127 714.5H1123Z" fill="#e8e8e8"/><circle cx="1125" cy="718.5" r="3.2" fill="none" stroke="#e8e8e8" stroke-width="1.6"/>
 <path d="M1131 708L1129 711.5H1131L1129.5 714.5" fill="none" stroke="#e0e0e0" stroke-width="1"/>
 <path d="M1147 708L1149 714.5H1145Z" fill="#e8e8e8"/><circle cx="1147" cy="718.5" r="3.2" fill="none" stroke="#e8e8e8" stroke-width="1.6"/>
 <path d="M1177.2 713.5H1183.5L1180.3 717Z" fill="#f2f2f2"/>
 <!-- gear -->
 <g transform="translate(1199.6 715)">
  <circle r="5" fill="none" stroke="#e0e0e0" stroke-width="2.6"/>
  <g stroke="#e0e0e0" stroke-width="2.2"><path d="M0 -7.3V-4.5M0 7.3V4.5M-7.3 0H-4.5M7.3 0H4.5M-5.2 -5.2L-3.2 -3.2M5.2 5.2L3.2 3.2M5.2 -5.2L3.2 -3.2M-5.2 5.2L-3.2 3.2"/></g>
 </g>
 <path d="M1214.2 713.5H1220.5L1217.3 717Z" fill="#f2f2f2"/>
 <path d="M1234.6 707.5V720M1228 714.4H1241.7" stroke="#ececec" stroke-width="1.6"/>
 <rect x="1251.5" y="708.4" width="5.5" height="5" fill="none" stroke="#d8d8d8" stroke-width="1"/>
 <circle cx="1262.5" cy="713.9" r="3.2" fill="none" stroke="#d8d8d8" stroke-width="1"/>
 <path d="M1254 720L1256.5 716.5L1259 720" fill="none" stroke="#d8d8d8" stroke-width="1"/>
</svg>
<div class="t" style="left:1162px;top:711px;color:#e8e8e8;font-size:11px;letter-spacing:-1px">1:1</div>
<div class="t" style="left:0px;top:689px;color:#f6f6f6;font-weight:bold;letter-spacing:-0.3px">del</div>
<div class="t" style="left:35px;top:689px;color:#c8c8c8;letter-spacing:-0.5px">Layout1</div>
<div class="t" style="left:92px;top:689px;color:#c8c8c8;letter-spacing:-0.45px">Layout2</div>
<div class="t" style="left:781px;top:710px;color:#ececec;font-size:11px;letter-spacing:-0.9px">MODEL</div>
</body></html>
